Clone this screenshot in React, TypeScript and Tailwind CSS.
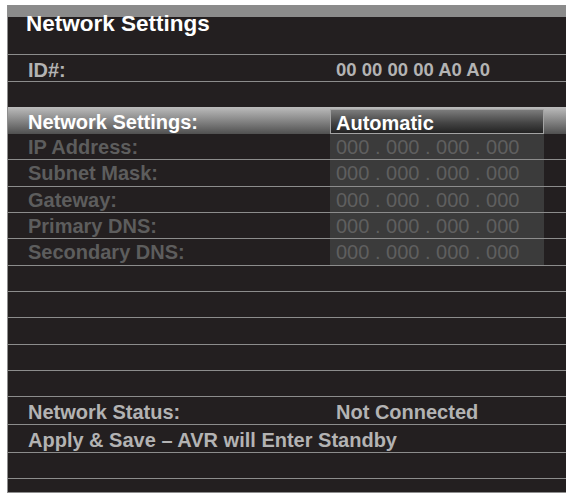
import React from "react";

type Row = {
  h: string;
  label?: string;
  value?: string;
  kind?: "plain" | "dim" | "select" | "empty";
  border?: boolean;
  small?: boolean;
};

const rows: Row[] = [
  { h: "h-[27px]", label: "ID#:", value: "00 00 00 00 A0 A0", kind: "plain", border: true, small: true },
  { h: "h-[26px]", kind: "empty", border: true },
  { h: "h-[27px]", label: "Network Settings:", value: "Automatic", kind: "select" },
  { h: "h-[25px]", label: "IP Address:", value: "000 . 000 . 000 . 000", kind: "dim" },
  { h: "h-[27px]", label: "Subnet Mask:", value: "000 . 000 . 000 . 000", kind: "dim", border: true },
  { h: "h-[26px]", label: "Gateway:", value: "000 . 000 . 000 . 000", kind: "dim", border: true },
  { h: "h-[26px]", label: "Primary DNS:", value: "000 . 000 . 000 . 000", kind: "dim", border: true },
  { h: "h-[27px]", label: "Secondary DNS:", value: "000 . 000 . 000 . 000", kind: "dim", border: true },
  { h: "h-[26px]", kind: "empty", border: true },
  { h: "h-[26px]", kind: "empty", border: true },
  { h: "h-[27px]", kind: "empty", border: true },
  { h: "h-[26px]", kind: "empty", border: true },
  { h: "h-[26px]", kind: "empty", border: true },
  { h: "h-[28px]", label: "Network Status:", value: "Not Connected", kind: "plain", border: true },
  { h: "h-[28px]", label: "Apply & Save \u2013 AVR will Enter Standby", kind: "plain", border: true },
  { h: "h-[26px]", kind: "empty", border: true },
];

function SettingRow({ row }: { row: Row }) {
  const line = row.border ? "border-t border-[#8c8c8c]" : "";

  if (row.kind === "select") {
    return (
      <div
        className={`${row.h} shrink-0 grid grid-cols-[322px_214px_1fr] bg-[linear-gradient(to_bottom,#bcbcbc,#8c8c8c_45%,#505050)]`}
      >
        <div className="pl-[20px] pt-[5px] text-[20px] leading-none font-bold text-white">
          {row.label}
        </div>
        <div className="my-[2px] border border-[#a3a3a3] bg-[linear-gradient(to_bottom,#7c7c7c,#454545_55%,#222222)] pl-[5px] pt-[3px] text-[20px] leading-none font-bold text-white">
          {row.value}
        </div>
        <div />
      </div>
    );
  }

  if (row.kind === "dim") {
    return (
      <div className={`${row.h} shrink-0 grid grid-cols-[322px_214px_1fr] ${line}`}>
        <div className="pl-[20px] pt-[3px] text-[20px] leading-none font-bold text-[#5d5d5d] whitespace-nowrap">
          {row.label}
        </div>
        <div className="bg-[#3b3b3b] pl-[6px] pt-[3px] text-[20px] leading-none text-[#5f5f5f] whitespace-nowrap">
          {row.value}
        </div>
        <div />
      </div>
    );
  }

  if (row.kind === "empty") {
    return <div className={`${row.h} shrink-0 ${line}`} />;
  }

  return (
    <div className={`${row.h} shrink-0 grid grid-cols-[322px_1fr] ${line}`}>
      <div className="pl-[20px] pt-[5px] text-[20px] leading-none font-bold text-[#b3b3b3] whitespace-nowrap">
        {row.label}
      </div>
      <div
        className={`pl-[6px] leading-none font-bold text-[#b3b3b3] whitespace-nowrap ${
          row.small ? "pt-[6px] text-[18.5px]" : "pt-[5px] text-[20px]"
        }`}
      >
        {row.value}
      </div>
    </div>
  );
}

export default function App() {
  return (
    <div className="min-h-screen bg-white pl-[7px] pt-[5px] font-['Liberation_Sans',Arial,sans-serif]">
      <div className="flex h-[488px] w-[559px] flex-col overflow-hidden border-b border-l border-[#8e8e8e] bg-[#231f20]">
        <div className="h-[49px] shrink-0 bg-[linear-gradient(to_bottom,#8b8b8b_0,#8b8b8b_12px,#231f20_12px)] pl-[18px] pt-[8px]">
          <span className="text-[22.5px] leading-none font-bold text-white">Network Settings</span>
        </div>
        {rows.map((row, i) => (
          <SettingRow key={i} row={row} />
        ))}
        <div className="flex-1 border-t border-[#8c8c8c]" />
      </div>
    </div>
  );
}
